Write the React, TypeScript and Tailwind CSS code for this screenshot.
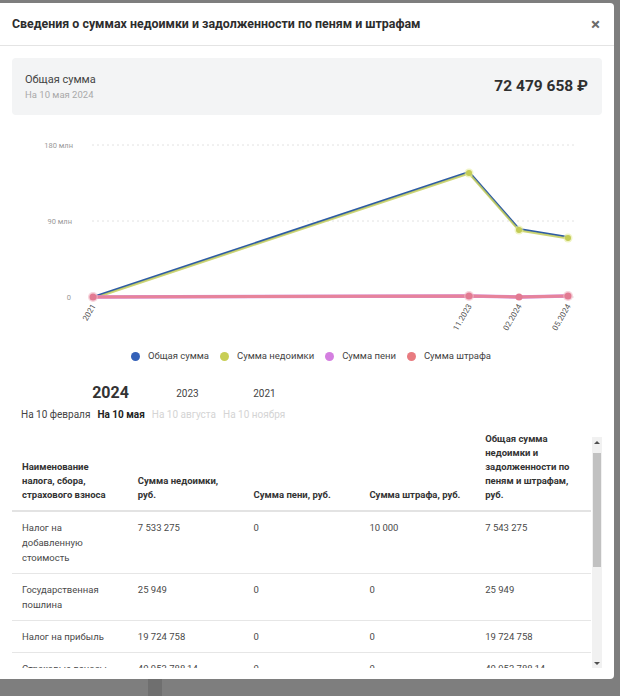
import React from 'react';

const legend = [
  { label: 'Общая сумма', color: 'bg-[#3461b8]' },
  { label: 'Сумма недоимки', color: 'bg-[#c8ce55]' },
  { label: 'Сумма пени', color: 'bg-[#d47fe0]' },
  { label: 'Сумма штрафа', color: 'bg-[#e87b80]' },
];

const rows = [
  { name: ['Налог на', 'добавленную', 'стоимость'], debt: '7 533 275', peni: '0', fine: '10 000', total: '7 543 275' },
  { name: ['Государственная', 'пошлина'], debt: '25 949', peni: '0', fine: '0', total: '25 949' },
  { name: ['Налог на прибыль'], debt: '19 724 758', peni: '0', fine: '0', total: '19 724 758' },
  { name: ['Страховые взносы'], debt: '40 953 788,14', peni: '0', fine: '0', total: '40 953 788,14' },
  { name: ['Налог на имущество', 'организаций'], debt: '4 231 888', peni: '0', fine: '0', total: '4 231 888' },
];

const pts: [number, number][] = [
  [81, 182],
  [457, 57],
  [507, 114],
  [556, 122],
];

const Chart: React.FC = () => {
  const line = pts.map((p) => p.join(',')).join(' ');
  const lineY = pts.map(([x, y]) => `${x},${y + 1.5}`).join(' ');
  const pink: [number, number][] = [
    [81, 182],
    [457, 181],
    [507, 182],
    [556, 181],
  ];
  const xLabels = ['2021', '11.2023', '02.2024', '05.2024'];
  return (
    <svg width="590" height="225" className="block">
      {[30, 106, 182].map((y) => (
        <line key={y} x1="80" x2="563" y1={y} y2={y} stroke="#e2e2e2" strokeWidth="1" strokeDasharray="2 3" />
      ))}
      <g fontFamily="Roboto, sans-serif" fontSize="7.5" fill="#9a9a9a" textAnchor="end">
        <text x="61" y="33">180 млн</text>
        <text x="60" y="109">90 млн</text>
        <text x="59" y="185">0</text>
      </g>
      <polyline points={line} fill="none" stroke="#2d5ba5" strokeWidth="2.2" strokeLinejoin="round" />
      <polyline points={lineY} fill="none" stroke="#c6cf5e" strokeWidth="2" strokeOpacity="0.85" strokeLinejoin="round" />
      {pts.slice(1).map(([x, y]) => (
        <g key={x}>
          <circle cx={x} cy={y + 1} r="4.5" fill="#e6eca0" opacity="0.6" />
          <circle cx={x} cy={y + 1} r="3" fill="#c3cc55" />
        </g>
      ))}
      <polyline points={pink.map((p) => p.join(',')).join(' ')} fill="none" stroke="#d28be0" strokeWidth="3.5" />
      <polyline points={pink.map((p) => p.join(',')).join(' ')} fill="none" stroke="#e7839a" strokeWidth="3" />
      {pink.map(([x, y], i) => (
        <g key={x}>
          {i !== 2 && <circle cx={x} cy={y} r="5" fill="#f0b7c4" opacity="0.6" />}
          <circle cx={x} cy={y} r="3.5" fill="#e27a92" />
        </g>
      ))}
      <g fontFamily="Roboto, sans-serif" fontSize="8" fill="#555" textAnchor="end">
        {pts.map(([x], i) => (
          <text key={x} x={x + 3} y={191} transform={`rotate(-60 ${x + 3} 191)`}>
            {xLabels[i]}
          </text>
        ))}
      </g>
    </svg>
  );
};

const Scrollbar: React.FC = () => (
  <div className="mt-[5px] flex h-[231px] w-[10px] flex-col items-center bg-[#f1f1f1]">
    <div className="flex h-[10px] w-full items-center justify-center">
      <div className="h-0 w-0 border-x-[3px] border-b-[3px] border-x-transparent border-b-[#505050]" />
    </div>
    <div className="mt-[6px] h-[114px] w-[8px] bg-[#c1c1c1]" />
    <div className="flex-1" />
    <div className="flex h-[10px] w-full items-center justify-center">
      <div className="h-0 w-0 border-x-[3px] border-t-[3px] border-x-transparent border-t-[#505050]" />
    </div>
  </div>
);

export default function App() {
  return (
    <div className="relative h-[696px] w-[620px] overflow-hidden bg-[#7e7e7e] pt-[3px] font-['Roboto',sans-serif]">
      <div className="absolute left-[148px] top-[679px] h-[17px] w-[14px] bg-[#6f6f6f]" />
      <div className="relative flex h-[676px] w-[614px] flex-col rounded-r-[4px] bg-white">
        <div className="flex h-[43px] items-center justify-between border-b border-[#e4e4e4] px-3">
          <h1 className="text-[12.4px] font-bold text-[#2d2d2d]">
            Сведения о суммах недоимки и задолженности по пеням и штрафам
          </h1>
          <span className="mr-[2px] text-[17px] font-bold leading-none text-[#6b6b6b]">×</span>
        </div>

        <div className="flex min-h-0 flex-1 flex-col px-3 pt-3">
          <div className="flex h-[57px] items-center justify-between rounded-[4px] bg-[#f3f4f5] pl-[13px] pr-[14px]">
            <div className="flex flex-col">
              <span className="text-[11px] leading-[16px] text-[#444]">Общая сумма</span>
              <span className="text-[9.5px] leading-[13px] text-[#a9a9a9]">На 10 мая 2024</span>
            </div>
            <span className="text-[15.5px] font-bold text-[#2f2f2f]">72 479 658 ₽</span>
          </div>

          <Chart />

          <div className="mt-[10px] flex h-[12px] items-center justify-center gap-[11px] pl-[8px]">
            {legend.map((l) => (
              <div key={l.label} className="flex items-center gap-[8px]">
                <span className={`h-[9px] w-[9px] rounded-full ${l.color}`} />
                <span className="text-[9.5px] text-[#444]">{l.label}</span>
              </div>
            ))}
          </div>

          <div className="mt-[21px] flex h-[20px] items-center pl-[60px]">
            <span className="w-[77px] text-center text-[16px] font-bold text-[#333]">2024</span>
            <span className="w-[77px] text-center text-[10px] text-[#444]">2023</span>
            <span className="w-[77px] text-center text-[10px] text-[#444]">2021</span>
          </div>

          <div className="mt-[4px] flex h-[14px] items-center gap-[7px] pl-[9px] text-[10px]">
            <span className="text-[#444]">На 10 февраля</span>
            <span className="font-bold text-[#222]">На 10 мая</span>
            <span className="text-[#d4d4d4]">На 10 августа</span>
            <span className="text-[#d4d4d4]">На 10 ноября</span>
          </div>

          <div className="mt-[11px] flex">
            <div className="h-[236px] flex-1 overflow-hidden">
              <table className="w-full table-fixed border-collapse text-left">
                <thead>
                  <tr className="border-b-2 border-[#e3e3e3] text-[9.5px] font-bold leading-[14px] text-[#333]">
                    <th className="h-[78px] pb-[8px] pl-[10px] align-bottom">
                      Наименование
                      <br />
                      налога, сбора,
                      <br />
                      страхового взноса
                    </th>
                    <th className="pb-[8px] pl-[10px] align-bottom">
                      Сумма недоимки,
                      <br />
                      руб.
                    </th>
                    <th className="pb-[8px] pl-[10px] align-bottom">Сумма пени, руб.</th>
                    <th className="pb-[8px] pl-[10px] align-bottom">Сумма штрафа, руб.</th>
                    <th className="pb-[8px] pl-[10px] align-bottom">
                      Общая сумма
                      <br />
                      недоимки и
                      <br />
                      задолженности по
                      <br />
                      пеням и штрафам,
                      <br />
                      руб.
                    </th>
                  </tr>
                </thead>
                <tbody>
                  {rows.map((r) => (
                    <tr key={r.debt} className="border-b border-[#e6e6e6] text-[9.5px] leading-[15px] text-[#4a4a4a]">
                      <td className="py-[8px] pl-[10px] align-top">
                        {r.name.map((n, i) => (
                          <div key={i}>{n}</div>
                        ))}
                      </td>
                      <td className="py-[8px] pl-[10px] align-top">{r.debt}</td>
                      <td className="py-[8px] pl-[10px] align-top">{r.peni}</td>
                      <td className="py-[8px] pl-[10px] align-top">{r.fine}</td>
                      <td className="py-[8px] pl-[10px] align-top">{r.total}</td>
                    </tr>
                  ))}
                </tbody>
              </table>
            </div>
            <div className="ml-[1px]">
              <Scrollbar />
            </div>
          </div>
        </div>
      </div>
    </div>
  );
}
